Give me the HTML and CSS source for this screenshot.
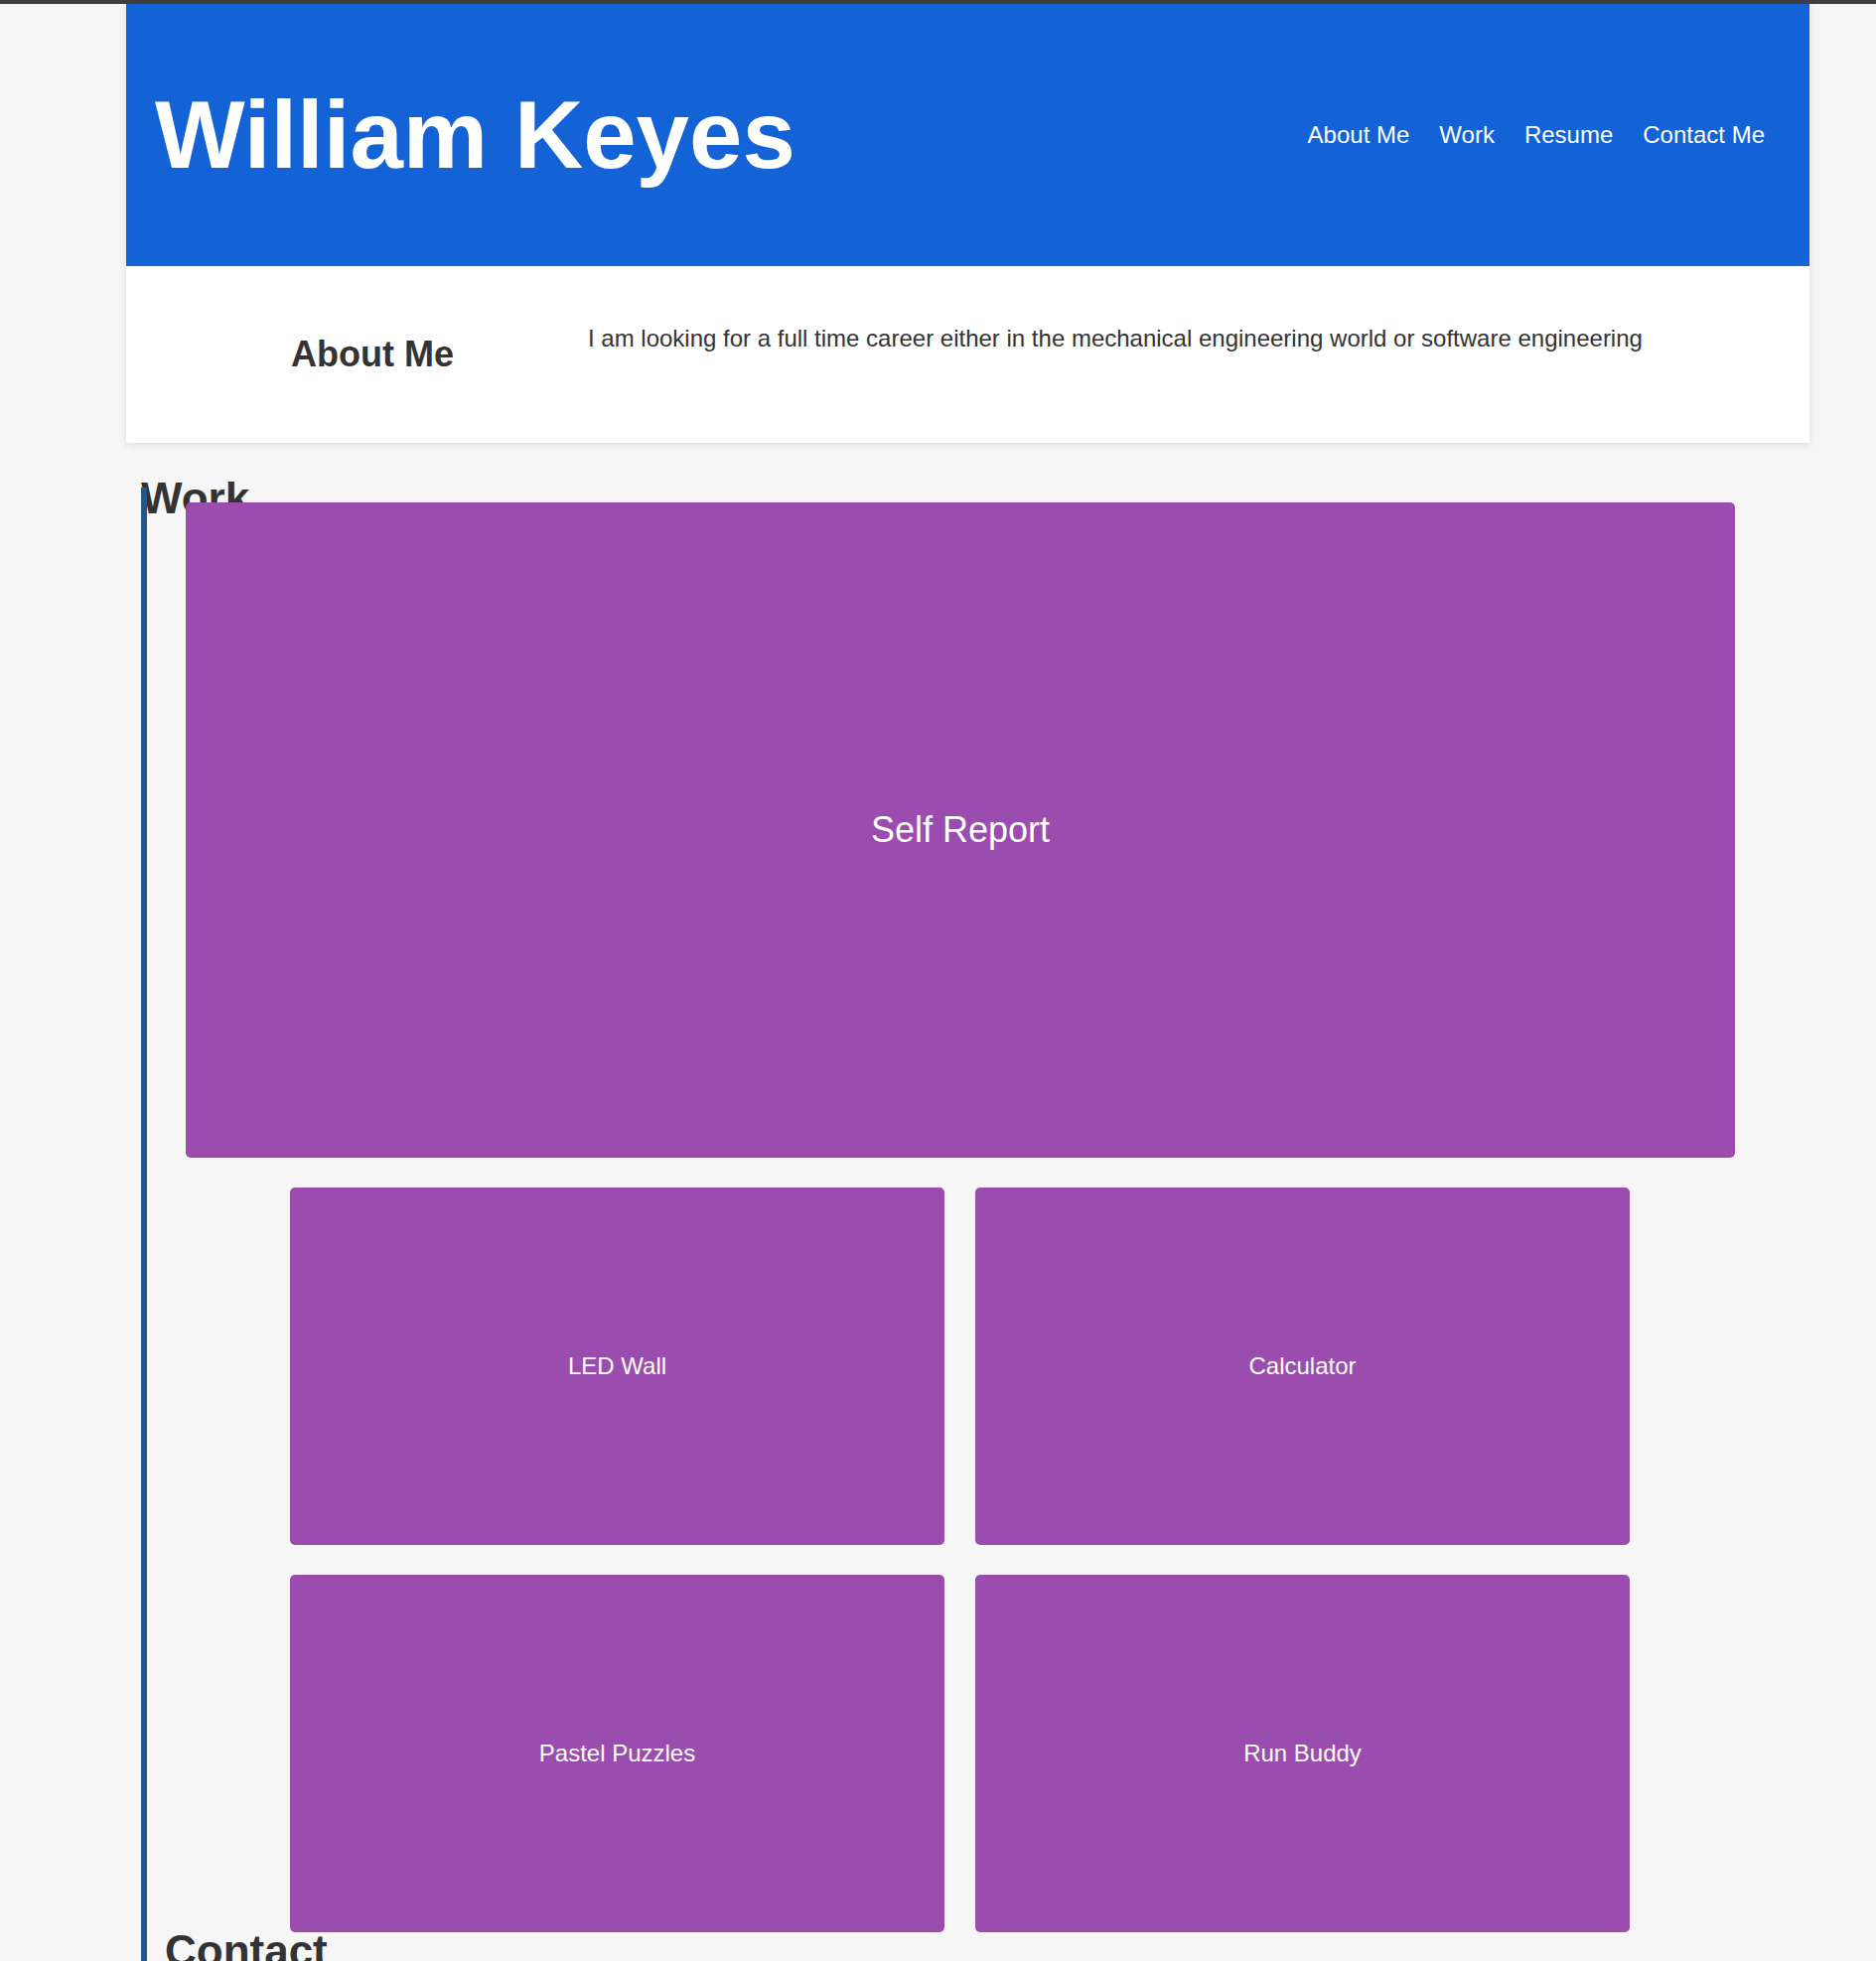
FILE: index.html
```html
<!DOCTYPE html>
<html lang="en">
<head>
<meta charset="utf-8">
<title>William Keyes</title>
<link rel="stylesheet" href="styles.css">
</head>
<body>
<div class="topbar"></div>
<div class="top">
  <header class="site-header">
    <h1 class="name">William Keyes</h1>
    <nav class="nav">
      <a href="#about">About Me</a>
      <a href="#work">Work</a>
      <a href="#resume">Resume</a>
      <a href="#contact">Contact Me</a>
    </nav>
  </header>
  <section class="about" id="about">
    <h2 class="about-title">About Me</h2>
    <p class="about-text">I am looking for a full time career either in the mechanical engineering world or software engineering</p>
  </section>
</div>
<main class="work-wrap" id="work">
  <h2 class="work-title">Work</h2>
  <section class="work">
    <div class="hero">Self Report</div>
    <div class="cards">
      <div class="card">LED Wall</div>
      <div class="card">Calculator</div>
      <div class="card">Pastel Puzzles</div>
      <div class="card">Run Buddy</div>
    </div>
    <h2 class="contact-title" id="contact">Contact</h2>
  </section>
</main>
</body>
</html>
```

FILE: styles.css
```css
html, body {
  margin: 0;
  padding: 0;
}

body {
  background: #f6f6f6;
  font-family: "Liberation Sans", Arial, sans-serif;
  color: #333333;
}

.topbar {
  height: 4px;
  background: #3f3f3f;
}

.top {
  margin-left: 127px;
  width: 1695px;
  box-shadow: 0 2px 8px rgba(0, 0, 0, 0.1);
}

.site-header {
  height: 264px;
  background: #1363d7;
  display: flex;
  align-items: center;
  justify-content: space-between;
  padding: 0 45px 0 29px;
  box-sizing: border-box;
}

.name {
  margin: 0;
  font-size: 96px;
  font-weight: bold;
  color: #ffffff;
}

.nav {
  display: flex;
  gap: 30px;
}

.nav a {
  color: #ffffff;
  text-decoration: none;
  font-size: 24px;
}

.about {
  background: #ffffff;
  height: 178px;
  display: flex;
  align-items: flex-start;
}

.about-title {
  margin: 68px 0 0 166px;
  width: 299px;
  font-size: 36px;
  font-weight: bold;
  color: #333333;
}

.about-text {
  margin: 59px 0 0 0;
  font-size: 24px;
  color: #333333;
}

.work-wrap {
  margin: 31px 0 0 142px;
  display: flex;
  flex-direction: column;
  align-items: flex-start;
}

.work-title {
  margin: 0;
  height: 14px;
  font-size: 44px;
  line-height: 50px;
  font-weight: bold;
  color: #333333;
}

.work {
  border-left: 6px solid #22568c;
  padding-top: 15px;
  width: 1638px;
  display: flex;
  flex-direction: column;
  align-items: flex-start;
}

.hero {
  margin-left: 39px;
  width: 1560px;
  height: 660px;
  background: #9a4dae;
  border-radius: 5px;
  color: #ffffff;
  font-size: 36px;
  display: flex;
  align-items: center;
  justify-content: center;
}

.cards {
  margin: 30px 0 0 144px;
  display: grid;
  grid-template-columns: 659px 659px;
  grid-auto-rows: 360px;
  column-gap: 31px;
  row-gap: 30px;
}

.card {
  background: #9a4dae;
  border-radius: 5px;
  color: #ffffff;
  font-size: 24px;
  display: flex;
  align-items: center;
  justify-content: center;
}

.contact-title {
  margin: -6px 0 0 18px;
  font-size: 44px;
  line-height: 50px;
  font-weight: bold;
  color: #333333;
}
```
